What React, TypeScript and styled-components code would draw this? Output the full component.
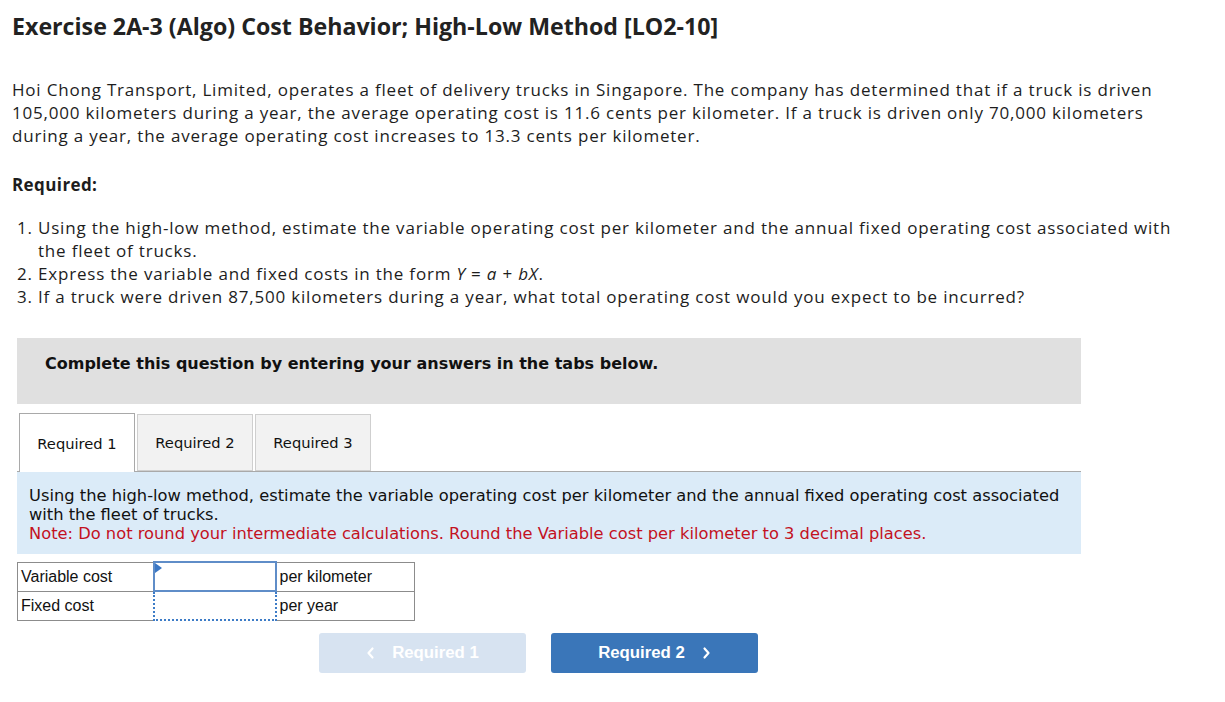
import React from "react";
import styled, { createGlobalStyle } from "styled-components";

const Global = createGlobalStyle`
  html, body { margin: 0; padding: 0; background: #fff; }
  body { font-family: "Open Sans", "Liberation Sans", sans-serif; color: #1d1d1d; }
`;

const Page = styled.div`
  padding: 12px 0 0 12px;
  width: 1190px;
`;

const Title = styled.h1`
  margin: 0;
  font-family: "Open Sans", sans-serif;
  font-weight: 700;
  font-size: 23.2px;
  line-height: 28px;
  color: #222;
`;

const Para = styled.p`
  margin: 38px 0 0 0;
  font-size: 17px;
  letter-spacing: 0.8px;
  line-height: 23px;
  color: #1d1d1d;
  width: 1175px;
`;

const ReqHead = styled.div`
  margin-top: 26px;
  font-weight: 700;
  font-size: 17px;
  line-height: 23px;
  letter-spacing: 0.4px;
`;

const List = styled.ol`
  margin: 20px 0 0 0;
  padding: 0 0 0 26px;
  font-size: 17px;
  letter-spacing: 0.8px;
  line-height: 23px;
  width: 1147px;
`;

const Italic = styled.i``;

const Panel = styled.div`
  margin: 30px 0 0 5px;
  width: 1064px;
`;

const Banner = styled.div`
  background: #e0e0e0;
  height: 66px;
  box-sizing: border-box;
  padding: 16px 0 0 28px;
  line-height: 20px;
  font-family: "DejaVu Sans", Verdana, sans-serif;
  font-weight: 700;
  font-size: 16px;
  color: #111;
`;

const Tabs = styled.div`
  display: flex;
  gap: 2px;
  margin-top: 9px;
  padding-left: 2px;
  border-bottom: 1px solid #a9a9a9;
  height: 58px;
  align-items: flex-end;
`;

const Tab = styled.div<{ $active?: boolean }>`
  width: 116px;
  height: ${p => (p.$active ? 59 : 57)}px;
  margin-bottom: ${p => (p.$active ? -1 : 0)}px;
  box-sizing: border-box;
  border: 1px solid ${p => (p.$active ? "#a9a9a9" : "#cfcfcf")};
  border-bottom: ${p => (p.$active ? "none" : "1px solid #cfcfcf")};
  background: ${p => (p.$active ? "#fff" : "#f2f2f2")};
  display: flex;
  align-items: center;
  justify-content: center;
  font-family: "DejaVu Sans", Verdana, sans-serif;
  font-size: 14.7px;
  color: #111;
`;

const Info = styled.div`
  background: #dbebf8;
  padding: 14px 12px 11px 12px;
  font-family: "DejaVu Sans", Verdana, sans-serif;
  font-size: 16.3px;
  line-height: 19px;
  color: #111;
`;

const Note = styled.div`
  color: #c3121f;
`;

const Table = styled.table`
  margin-top: 7px;
  border-collapse: collapse;
  font-family: "Liberation Sans", Arial, sans-serif;
  font-size: 16px;
  color: #111;
`;

const Cell = styled.td`
  border: 1px solid #8c8c8c;
  height: 29px;
  padding: 0 3px;
  box-sizing: border-box;
`;

const LabelCell = styled(Cell)`
  width: 136px;
`;

const UnitCell = styled(Cell)`
  width: 139px;
`;

const InputCell = styled.td<{ $focused?: boolean }>`
  width: 122px;
  height: 29px;
  padding: 0;
  box-sizing: border-box;
  border: ${p => (p.$focused ? "2px solid #5f8dc8" : "2px dotted #3d7cc7")};
  position: relative;
`;

const Flag = styled.span`
  position: absolute;
  left: 0;
  top: 0;
  width: 0;
  height: 0;
  border-top: 5px solid transparent;
  border-bottom: 5px solid transparent;
  border-left: 7px solid #3b77c4;
`;

const Buttons = styled.div`
  display: flex;
  gap: 25px;
  margin: 12px 0 0 302px;
`;

const NavButton = styled.button<{ $disabled?: boolean }>`
  width: 207px;
  height: 40px;
  border: none;
  border-radius: 3px;
  background: ${p => (p.$disabled ? "#d7e3f1" : "#3a76b9")};
  color: #fff;
  font-family: "Liberation Sans", Arial, sans-serif;
  font-weight: 700;
  font-size: 16.8px;
  display: flex;
  align-items: center;
  justify-content: center;
  gap: 17px;
  padding: 0;
`;

const Chevron = ({ dir }: { dir: "left" | "right" }) => (
  <svg width="9" height="14" viewBox="0 0 9 14">
    <path
      d={dir === "left" ? "M6.5 2.5 L2.5 7 L6.5 11.5" : "M2.5 2.5 L6.5 7 L2.5 11.5"}
      fill="none"
      stroke="#fff"
      strokeWidth="2.2"
      strokeLinecap="round"
      strokeLinejoin="round"
    />
  </svg>
);

export default function App() {
  return (
    <>
      <Global />
      <Page>
        <Title>Exercise 2A-3 (Algo) Cost Behavior; High-Low Method [LO2-10]</Title>
        <Para>
          Hoi Chong Transport, Limited, operates a fleet of delivery trucks in Singapore. The company has determined that if a truck is driven
          105,000 kilometers during a year, the average operating cost is 11.6 cents per kilometer. If a truck is driven only 70,000 kilometers
          during a year, the average operating cost increases to 13.3 cents per kilometer.
        </Para>
        <ReqHead>Required:</ReqHead>
        <List>
          <li>
            Using the high-low method, estimate the variable operating cost per kilometer and the annual fixed operating cost associated with
            the fleet of trucks.
          </li>
          <li>
            Express the variable and fixed costs in the form <Italic>Y</Italic> = <Italic>a</Italic> + <Italic>bX</Italic>.
          </li>
          <li>If a truck were driven 87,500 kilometers during a year, what total operating cost would you expect to be incurred?</li>
        </List>
        <Panel>
          <Banner>Complete this question by entering your answers in the tabs below.</Banner>
          <Tabs>
            <Tab $active>Required 1</Tab>
            <Tab>Required 2</Tab>
            <Tab>Required 3</Tab>
          </Tabs>
          <Info>
            Using the high-low method, estimate the variable operating cost per kilometer and the annual fixed operating cost associated
            with the fleet of trucks.
            <Note>Note: Do not round your intermediate calculations. Round the Variable cost per kilometer to 3 decimal places.</Note>
          </Info>
          <Table>
            <tbody>
              <tr>
                <LabelCell>Variable cost</LabelCell>
                <InputCell $focused>
                  <Flag />
                </InputCell>
                <UnitCell>per kilometer</UnitCell>
              </tr>
              <tr>
                <LabelCell>Fixed cost</LabelCell>
                <InputCell />
                <UnitCell>per year</UnitCell>
              </tr>
            </tbody>
          </Table>
          <Buttons>
            <NavButton $disabled>
              <Chevron dir="left" />
              Required 1
            </NavButton>
            <NavButton>
              Required 2
              <Chevron dir="right" />
            </NavButton>
          </Buttons>
        </Panel>
      </Page>
    </>
  );
}
